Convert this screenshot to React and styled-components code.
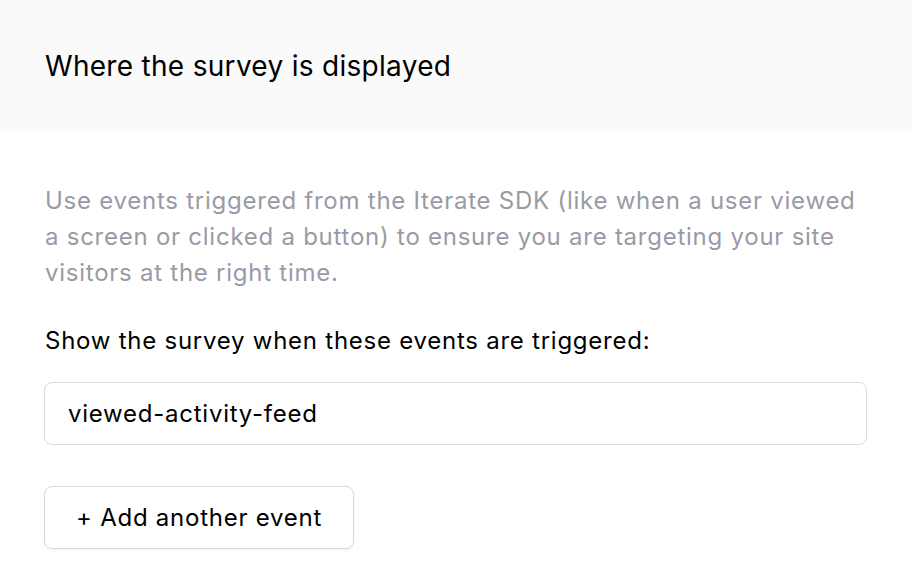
import React from 'react';
import styled, { createGlobalStyle } from 'styled-components';

const GlobalStyle = createGlobalStyle`
  html, body {
    margin: 0;
    padding: 0;
    background: #ffffff;
  }
  body {
    font-family: Inter, "Noto Sans", sans-serif;
    color: #000000;
  }
`;

const App = () => {
  return (
    <Page>
      <GlobalStyle />
      <Header>
        <Title>Where the survey is displayed</Title>
      </Header>

      <Body>
        <Help>
          Use events triggered from the Iterate SDK (like when a user viewed
          a screen or clicked a button) to ensure you are targeting your site
          visitors at the right time.
        </Help>

        <Label>Show the survey when these events are triggered:</Label>

        <EventInput defaultValue="viewed-activity-feed" />

        <AddButton type="button">+ Add another event</AddButton>
      </Body>
    </Page>
  );
};

export default App;

const Page = styled.div`
  width: 912px;
  min-height: 586px;
  display: flex;
  flex-direction: column;
`;

const Header = styled.div`
  height: 131px;
  box-sizing: border-box;
  background: #fafafa;
  padding: 0 45px;
  display: flex;
  align-items: center;
`;

const Title = styled.h2`
  margin: 0;
  font-size: 28px;
  font-weight: 400;
  letter-spacing: 0.3px;
  color: #000000;
`;

const Body = styled.div`
  padding: 52px 45px 36px 44px;
  display: flex;
  flex-direction: column;
  align-items: flex-start;
`;

const Help = styled.p`
  margin: 0 0 0 1px;
  max-width: 822px;
  font-size: 24px;
  line-height: 36px;
  letter-spacing: 0.75px;
  color: #9a9aa6;
`;

const Label = styled.div`
  margin: 32px 0 23px 1px;
  font-size: 24px;
  line-height: 36px;
  letter-spacing: 0.75px;
  color: #000000;
`;

const EventInput = styled.input`
  width: 823px;
  height: 63px;
  box-sizing: border-box;
  border: 1.5px solid #d9d9d9;
  border-radius: 8px;
  padding: 0 23px;
  font-family: Inter, "Noto Sans", sans-serif;
  font-size: 24px;
  letter-spacing: 0.75px;
  color: #000000;
  background: #ffffff;
  outline: none;
`;

const AddButton = styled.button`
  margin-top: 41px;
  height: 63px;
  padding: 0 31px;
  box-sizing: border-box;
  border: 1.5px solid #d9d9d9;
  border-radius: 8px;
  background: #ffffff;
  box-shadow: 0 2px 3px rgba(0, 0, 0, 0.04);
  font-family: Inter, "Noto Sans", sans-serif;
  font-size: 24px;
  letter-spacing: 0.75px;
  color: #000000;
  cursor: pointer;
`;
